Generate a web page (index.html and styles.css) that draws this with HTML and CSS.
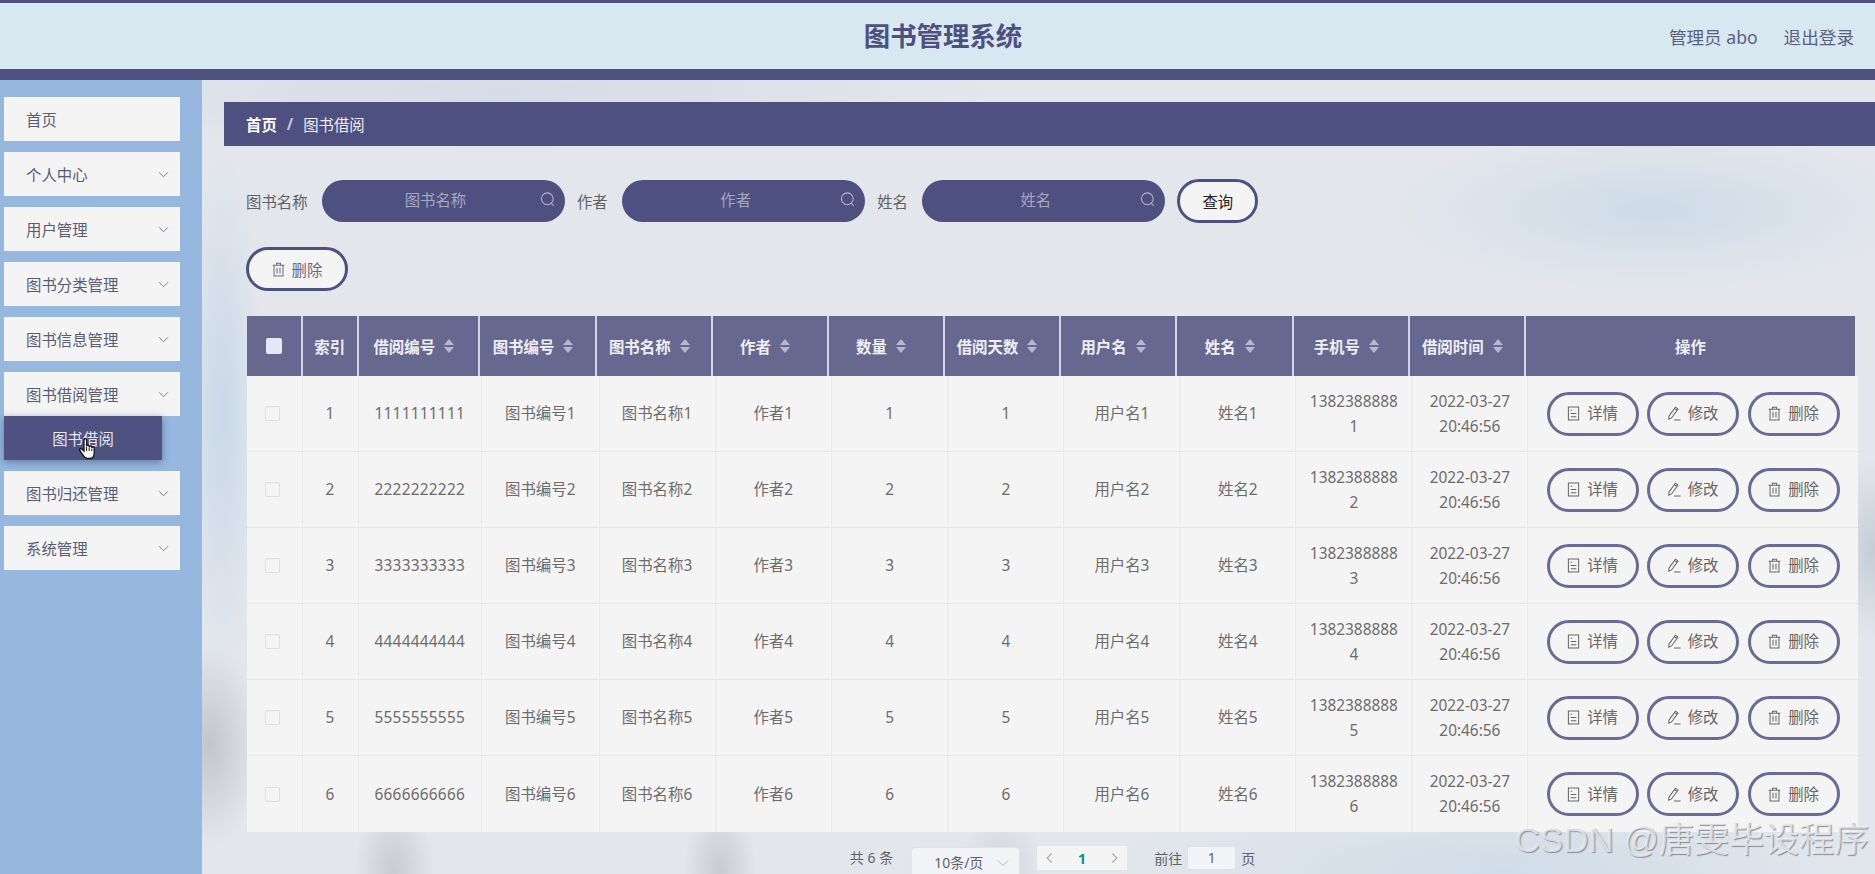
FILE: index.html
```html
<!DOCTYPE html>
<html lang="zh-CN">
<head>
<meta charset="utf-8">
<title>图书管理系统</title>
<link rel="stylesheet" href="styles.css">
</head>
<body>
<svg class="defs" aria-hidden="true">
  <symbol id="i-doc" viewBox="0 0 14 16"><path d="M1.5 1h11v14h-11zM4 4.5h1.5M4 8h6M4 11.5h6" fill="none" stroke="currentColor" stroke-width="1.1"/></symbol>
  <symbol id="i-edit" viewBox="0 0 14 16"><path d="M1 10.8 8 1.2l2.8 2-7 9.6-3 1.4zM7 2.8l2.8 2M6.5 15h7" fill="none" stroke="currentColor" stroke-width="1.1"/></symbol>
  <symbol id="i-del" viewBox="0 0 14 16"><path d="M.8 3.5h12.4M4.8 3.5V1.2h4.4v2.3M2.2 3.5V15h9.6V3.5M5.4 6.2v6.2M8.6 6.2v6.2" fill="none" stroke="currentColor" stroke-width="1.1"/></symbol>
  <symbol id="i-search" viewBox="0 0 15 15"><path d="M13.2 6.8a5.9 5.9 0 1 1-11.8 0 5.9 5.9 0 0 1 11.8 0zM11.2 11.2l2.6 2.8" fill="none" stroke="currentColor" stroke-width="1.1"/></symbol>
  <symbol id="i-down" viewBox="0 0 12 8"><path d="M1 1.5 6 6.5l5-5" fill="none" stroke="currentColor" stroke-width="1"/></symbol>
  <symbol id="i-left" viewBox="0 0 8 14"><path d="M6.5 1.5 1.5 7l5 5.5" fill="none" stroke="currentColor" stroke-width="1.3"/></symbol>
  <symbol id="i-right" viewBox="0 0 8 14"><path d="M1.5 1.5 6.5 7l-5 5.5" fill="none" stroke="currentColor" stroke-width="1.3"/></symbol>
</svg>

<header class="topbar">
  <div></div>
  <h1 class="title">图书管理系统</h1>
  <div class="user"><span>管理员 abo</span><span>退出登录</span></div>
</header>

<div class="layout">
  <nav class="side">
    <div class="menu-item"><span>首页</span></div>
    <div class="menu-item"><span>个人中心</span><svg class="chev"><use href="#i-down"/></svg></div>
    <div class="menu-item"><span>用户管理</span><svg class="chev"><use href="#i-down"/></svg></div>
    <div class="menu-item"><span>图书分类管理</span><svg class="chev"><use href="#i-down"/></svg></div>
    <div class="menu-item"><span>图书信息管理</span><svg class="chev"><use href="#i-down"/></svg></div>
    <div class="menu-group">
      <div class="menu-item"><span>图书借阅管理</span><svg class="chev"><use href="#i-down"/></svg></div>
      <div class="sub-item">图书借阅
        <svg class="hand" viewBox="0 0 18 22"><path d="M6 2a1.3 1.3 0 0 1 2.6 0v6.5a1.3 1.3 0 0 1 2.6 0v.8a1.3 1.3 0 0 1 2.6 0v.8a1.2 1.2 0 0 1 2.4 0V15c0 3-1.5 5.5-4.5 5.5H9.5C7.5 20.5 6.5 19.5 5 17L1.8 12.5c-.9-1.3.8-2.6 1.9-1.6L6 13z" fill="#fff" stroke="#111" stroke-width="1.3"/><path d="M8.6 9v4M11.2 9.5V13M13.8 10.5V13" stroke="#111" fill="none"/></svg>
      </div>
    </div>
    <div class="menu-item"><span>图书归还管理</span><svg class="chev"><use href="#i-down"/></svg></div>
    <div class="menu-item"><span>系统管理</span><svg class="chev"><use href="#i-down"/></svg></div>
  </nav>

  <main class="content">
    <div class="crumb"><b>首页</b><i>/</i><span>图书借阅</span></div>

    <div class="panel">
      <div class="search">
        <label class="field"><span>图书名称</span><span class="pill"><input placeholder="图书名称"><svg class="s-ico"><use href="#i-search"/></svg></span></label>
        <label class="field"><span>作者</span><span class="pill"><input placeholder="作者"><svg class="s-ico"><use href="#i-search"/></svg></span></label>
        <label class="field"><span>姓名</span><span class="pill"><input placeholder="姓名"><svg class="s-ico"><use href="#i-search"/></svg></span></label>
        <button class="btn-query">查询</button>
      </div>

      <button class="btn-del"><svg class="ico"><use href="#i-del"/></svg>删除</button>

      <div class="table">
        <div class="thead">
          <div class="th"><span class="cb-all"></span></div>
          <div class="th">索引</div>
          <div class="th">借阅编号<span class="sort"></span></div>
          <div class="th">图书编号<span class="sort"></span></div>
          <div class="th">图书名称<span class="sort"></span></div>
          <div class="th">作者<span class="sort"></span></div>
          <div class="th">数量<span class="sort"></span></div>
          <div class="th">借阅天数<span class="sort"></span></div>
          <div class="th">用户名<span class="sort"></span></div>
          <div class="th">姓名<span class="sort"></span></div>
          <div class="th">手机号<span class="sort"></span></div>
          <div class="th">借阅时间<span class="sort"></span></div>
          <div class="th">操作</div>
        </div>

        <div class="tr">
          <div class="td"><span class="cb"></span></div><div class="td">1</div><div class="td num">1111111111</div><div class="td">图书编号1</div><div class="td">图书名称1</div><div class="td">作者1</div><div class="td">1</div><div class="td">1</div><div class="td">用户名1</div><div class="td">姓名1</div><div class="td phone">13823888881</div><div class="td">2022-03-27 20:46:56</div>
          <div class="td ops"><button class="op"><svg class="ico"><use href="#i-doc"/></svg>详情</button><button class="op"><svg class="ico"><use href="#i-edit"/></svg>修改</button><button class="op"><svg class="ico"><use href="#i-del"/></svg>删除</button></div>
        </div>
        <div class="tr">
          <div class="td"><span class="cb"></span></div><div class="td">2</div><div class="td num">2222222222</div><div class="td">图书编号2</div><div class="td">图书名称2</div><div class="td">作者2</div><div class="td">2</div><div class="td">2</div><div class="td">用户名2</div><div class="td">姓名2</div><div class="td phone">13823888882</div><div class="td">2022-03-27 20:46:56</div>
          <div class="td ops"><button class="op"><svg class="ico"><use href="#i-doc"/></svg>详情</button><button class="op"><svg class="ico"><use href="#i-edit"/></svg>修改</button><button class="op"><svg class="ico"><use href="#i-del"/></svg>删除</button></div>
        </div>
        <div class="tr">
          <div class="td"><span class="cb"></span></div><div class="td">3</div><div class="td num">3333333333</div><div class="td">图书编号3</div><div class="td">图书名称3</div><div class="td">作者3</div><div class="td">3</div><div class="td">3</div><div class="td">用户名3</div><div class="td">姓名3</div><div class="td phone">13823888883</div><div class="td">2022-03-27 20:46:56</div>
          <div class="td ops"><button class="op"><svg class="ico"><use href="#i-doc"/></svg>详情</button><button class="op"><svg class="ico"><use href="#i-edit"/></svg>修改</button><button class="op"><svg class="ico"><use href="#i-del"/></svg>删除</button></div>
        </div>
        <div class="tr">
          <div class="td"><span class="cb"></span></div><div class="td">4</div><div class="td num">4444444444</div><div class="td">图书编号4</div><div class="td">图书名称4</div><div class="td">作者4</div><div class="td">4</div><div class="td">4</div><div class="td">用户名4</div><div class="td">姓名4</div><div class="td phone">13823888884</div><div class="td">2022-03-27 20:46:56</div>
          <div class="td ops"><button class="op"><svg class="ico"><use href="#i-doc"/></svg>详情</button><button class="op"><svg class="ico"><use href="#i-edit"/></svg>修改</button><button class="op"><svg class="ico"><use href="#i-del"/></svg>删除</button></div>
        </div>
        <div class="tr">
          <div class="td"><span class="cb"></span></div><div class="td">5</div><div class="td num">5555555555</div><div class="td">图书编号5</div><div class="td">图书名称5</div><div class="td">作者5</div><div class="td">5</div><div class="td">5</div><div class="td">用户名5</div><div class="td">姓名5</div><div class="td phone">13823888885</div><div class="td">2022-03-27 20:46:56</div>
          <div class="td ops"><button class="op"><svg class="ico"><use href="#i-doc"/></svg>详情</button><button class="op"><svg class="ico"><use href="#i-edit"/></svg>修改</button><button class="op"><svg class="ico"><use href="#i-del"/></svg>删除</button></div>
        </div>
        <div class="tr">
          <div class="td"><span class="cb"></span></div><div class="td">6</div><div class="td num">6666666666</div><div class="td">图书编号6</div><div class="td">图书名称6</div><div class="td">作者6</div><div class="td">6</div><div class="td">6</div><div class="td">用户名6</div><div class="td">姓名6</div><div class="td phone">13823888886</div><div class="td">2022-03-27 20:46:56</div>
          <div class="td ops"><button class="op"><svg class="ico"><use href="#i-doc"/></svg>详情</button><button class="op"><svg class="ico"><use href="#i-edit"/></svg>修改</button><button class="op"><svg class="ico"><use href="#i-del"/></svg>删除</button></div>
        </div>
      </div>

      <div class="pager">
        <span class="total">共 6 条</span>
        <span class="size">10条/页<svg class="size-chev"><use href="#i-down"/></svg></span>
        <span class="pages"><svg class="arrow"><use href="#i-left"/></svg><b>1</b><svg class="arrow"><use href="#i-right"/></svg></span>
        <span class="goto">前往<span class="goto-box">1</span>页</span>
      </div>
    </div>
  </main>
</div>

<div class="watermark">CSDN @唐雯毕设程序</div>
</body>
</html>
```

FILE: styles.css
```css
* { box-sizing: border-box; }
html, body { margin: 0; padding: 0; height: 874px; overflow: hidden; }
body {
  position: relative;
  font-family: "Noto Sans", "Noto Sans CJK SC", sans-serif;
  font-size: 15.4px;
  color: #666;
}
.defs { position: absolute; width: 0; height: 0; }

.topbar {
  height: 80px;
  border-top: 3px solid #4e5080;
  border-bottom: 11px solid #4e5080;
  background: #d8e8f1;
  display: grid;
  grid-template-columns: 1fr auto 1fr;
  align-items: center;
  padding: 0 21px 0 32px;
}
.title { margin: 0; font-size: 26.4px; line-height: 36px; font-weight: 700; color: #4e5080; }
.user { display: flex; justify-content: flex-end; gap: 26px; font-size: 17.6px; color: #5a6082; }

.layout { display: flex; height: 794px; }

.side {
  width: 202px;
  flex: none;
  background: #97b8de;
  padding: 17px 0 0 4px;
  display: flex;
  flex-direction: column;
  gap: 11px;
}
.menu-group { display: flex; flex-direction: column; }
.menu-item {
  width: 176px;
  height: 44px;
  flex: none;
  background: #f4f4f5;
  color: #5a5c74;
  display: flex;
  align-items: center;
  justify-content: space-between;
  padding: 0 11px 0 22px;
}
.chev { width: 11px; height: 7px; color: #666a80; }
.sub-item {
  position: relative;
  width: 158px;
  height: 44px;
  background: #4f5180;
  color: #e6e7f0;
  display: flex;
  align-items: center;
  justify-content: center;
  box-shadow: 0 2px 8px rgba(40, 45, 80, .45);
}
.hand { position: absolute; left: 74px; top: 22px; width: 18px; height: 22px; }

.content {
  flex: 1;
  min-width: 0;
  padding: 22px 0 0 22px;
  background-color: #e3e7ec;
  background-image:
    radial-gradient(ellipse 50px 100px at 8px 665px, rgba(160, 165, 172, .5), transparent),
    radial-gradient(ellipse 40px 70px at 192px 790px, rgba(165, 170, 178, .45), transparent),
    radial-gradient(ellipse 36px 70px at 518px 790px, rgba(165, 170, 178, .45), transparent),
    radial-gradient(ellipse 40px 60px at 800px 790px, rgba(175, 180, 188, .35), transparent),
    radial-gradient(ellipse 260px 80px at 1450px 130px, rgba(200, 216, 230, .8), transparent),
    radial-gradient(ellipse 400px 90px at 1300px 790px, rgba(200, 216, 230, .7), transparent),
    radial-gradient(ellipse 40px 260px at 20px 330px, rgba(195, 212, 232, .8), transparent),
    radial-gradient(ellipse 40px 90px at 1670px 470px, rgba(170, 178, 190, .5), transparent),
    radial-gradient(ellipse 500px 60px at 300px 10px, rgba(205, 215, 226, .7), transparent);
  background-repeat: no-repeat;
}
.crumb {
  height: 44px;
  background: #4e5080;
  color: #eeeef5;
  display: flex;
  align-items: center;
  padding-left: 22px;
}
.crumb b { color: #fff; font-weight: 700; }
.crumb i { margin: 0 10px; color: #c4c5d8; font-style: normal; font-weight: 700; }

.panel { padding: 33px 0 0 22px; }
.search { display: flex; align-items: center; gap: 12px; height: 44px; }
.field { display: flex; align-items: center; gap: 14.4px; color: #606266; }
.pill {
  position: relative;
  width: 243px;
  height: 42px;
  border-radius: 21px;
  background: #4e5080;
  display: block;
}
.pill input {
  width: 100%;
  height: 100%;
  border: 0;
  outline: 0;
  background: transparent;
  padding: 0 16px 2px 0;
  text-align: center;
  font: inherit;
  color: #c0c4cc;
}
.pill input::placeholder { color: #a5a7c0; opacity: 1; }
.s-ico { position: absolute; right: 10px; top: 12px; width: 15px; height: 15px; color: #b0b2c8; }

.btn-query, .btn-del, .op {
  font: inherit;
  background: #f4f4f5;
  border-style: solid;
  border-radius: 22px;
  padding: 0;
  display: flex;
  align-items: center;
  justify-content: center;
}
.btn-query { width: 81px; height: 44px; border: 3px solid #4e5080; color: #222; }
.btn-del { width: 102px; height: 44px; margin: 24px 0 25px; border: 3px solid #4e5080; color: #6a6a7e; gap: 7px; }
.ico { width: 13px; height: 15px; flex: none; }

.table { width: 1611px; margin-left: 1px; }
.thead, .tr { display: grid; }
.thead {
  grid-template-columns: 54px 55.5px 121.5px 117px 115.5px 116px 116px 116px 116px 117.5px 115.5px 116.5px 331px;
  width: 1608px;
  height: 60px;
  background: #66688f;
}
.th {
  display: flex;
  align-items: center;
  justify-content: center;
  border-left: 2px solid #d4d5e2;
  color: #eeeff5;
  font-weight: 700;
}
.th:first-child { border-left: 0; }
.sort { position: relative; width: 11px; height: 14px; margin: 0 8px 0 9px; flex: none; }
.sort::before, .sort::after {
  content: "";
  position: absolute;
  left: 0;
  border-left: 5.5px solid transparent;
  border-right: 5.5px solid transparent;
}
.sort::before { top: 0; border-bottom: 6px solid #b6b8cc; }
.sort::after { bottom: 0; border-top: 6px solid #b6b8cc; }
.cb-all { width: 16px; height: 16px; border-radius: 2px; background: #e4e8f5; }

.tr {
  grid-template-columns: 55.5px 56px 123.5px 117.5px 116px 116.5px 116.2px 116.2px 116px 116px 116px 116px 329.5px;
  height: 76px;
  background: #f4f4f5;
  border-bottom: 1px solid #e4e6e9;
}
.tr:last-child { border-bottom: 0; }
.td {
  display: flex;
  align-items: center;
  justify-content: center;
  text-align: center;
  line-height: 25px;
  padding: 0 12px;
  border-right: 1px solid #e8e9eb;
  color: #6c6c6c;
}
.td:last-child { border-right: 0; }
.num { letter-spacing: .25px; }
.phone { word-break: break-all; }
.cb {
  width: 15px;
  height: 15px;
  margin-right: 4px;
  flex: none;
  border: 1px solid #dcdfe3;
  border-radius: 2px;
  background: #f4f4f5;
}
.ops { gap: 8.5px; padding: 0; }
.op { width: 92px; height: 44px; gap: 7px; border: 3px solid #6a6a96; color: #666; flex: none; }

.pager {
  width: 1613px;
  margin-top: 14px;
  height: 44px;
  display: flex;
  justify-content: center;
  align-items: flex-start;
  font-size: 14px;
  color: #606266;
}
.total { margin-top: 2px; line-height: 20px; }
.size {
  position: relative;
  width: 109px;
  height: 36px;
  margin: 1px 0 0 18px;
  padding: 5px 0 0 22px;
  background: #f1f3f6;
  border: 1px solid #dfe3e8;
  border-radius: 4px;
  line-height: 20px;
}
.size-chev { position: absolute; right: 10px; top: 11px; width: 12px; height: 8px; color: #b4b8c0; }
.pages {
  width: 90px;
  height: 24px;
  margin-left: 17px;
  background: #f4f4f5;
  display: flex;
  align-items: center;
  justify-content: space-between;
  padding: 0 9px;
  line-height: 22px;
  font-size: 15px;
}
.pages b { color: #12908c; }
.arrow { width: 7px; height: 12px; color: #9a9da6; }
.goto { margin-left: 27px; display: flex; align-items: center; gap: 5px; height: 24px; }
.goto-box {
  width: 49px;
  height: 24px;
  background: #f2f4f7;
  border: 1px solid #dfe3e8;
  border-radius: 4px;
  text-align: center;
  line-height: 22px;
}

.watermark {
  position: absolute;
  right: 6px;
  top: 818px;
  font-family: "Liberation Sans", "Noto Sans CJK SC", sans-serif;
  font-size: 35px;
  line-height: 44px;
  white-space: nowrap;
  color: rgba(245, 246, 248, .72);
  text-shadow: 1px 1px 1px rgba(110, 115, 125, .75);
}
```
